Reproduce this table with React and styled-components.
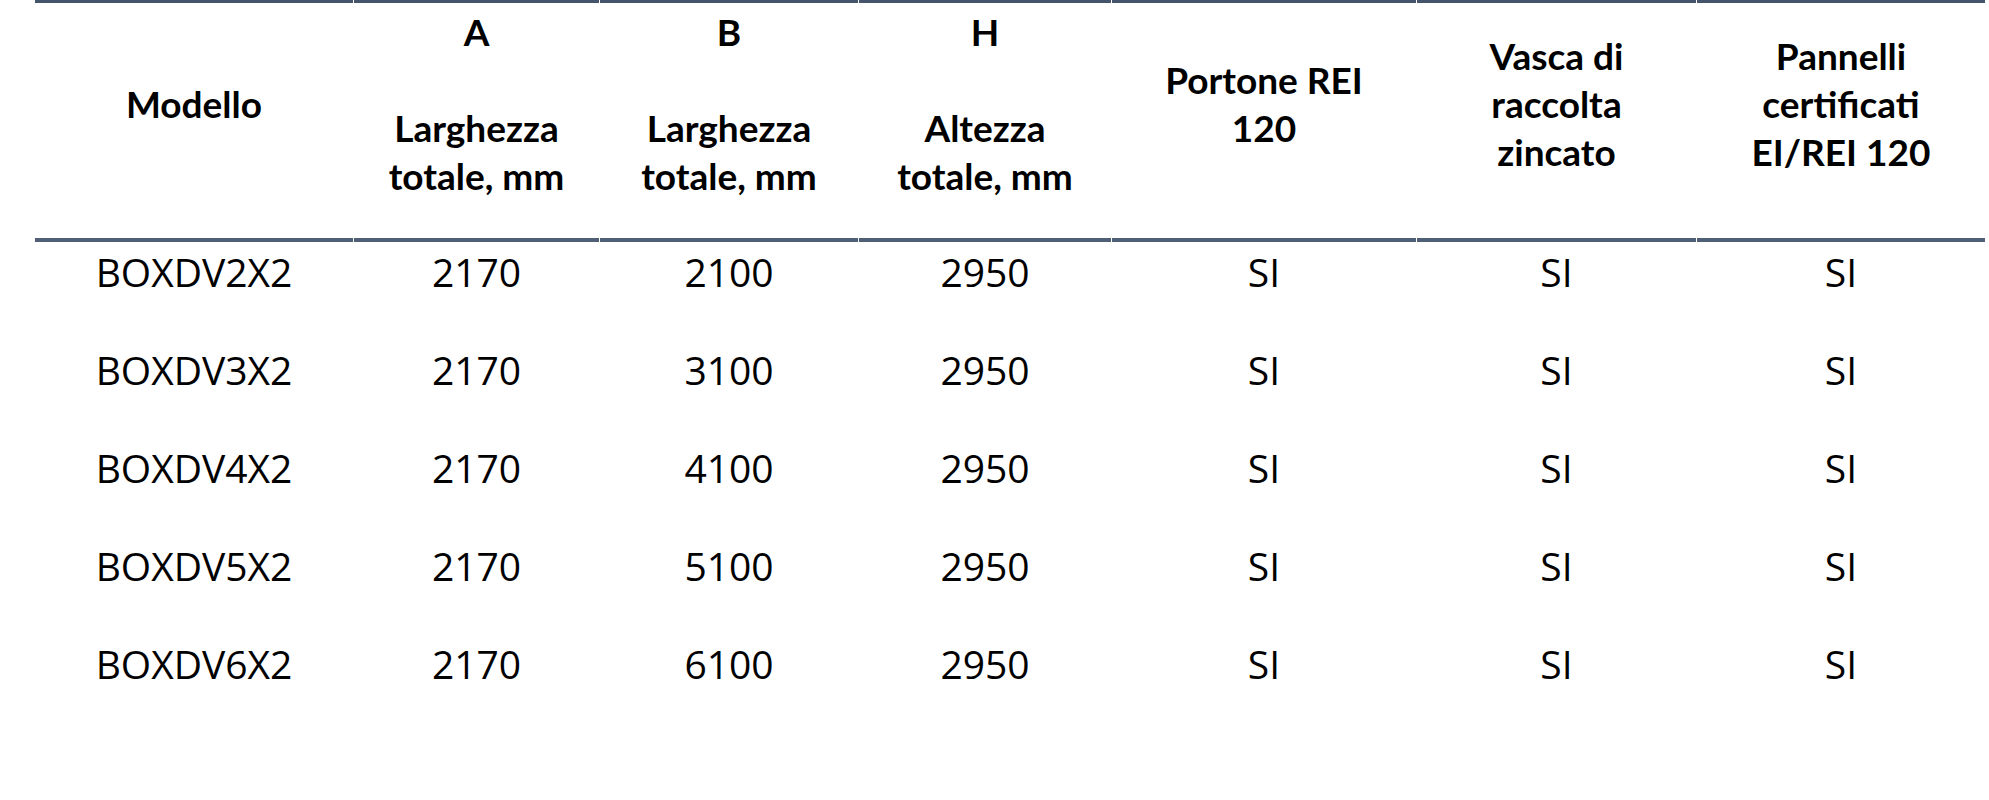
import React from "react";
import styled, { createGlobalStyle } from "styled-components";

const GlobalStyle = createGlobalStyle`
  html, body {
    margin: 0;
    padding: 0;
    background: #ffffff;
  }
`;

const columns = [318, 245, 258, 252, 304, 279, 288];

const headers = [
  ["Modello"],
  ["A", "", "Larghezza", "totale, mm"],
  ["B", "", "Larghezza", "totale, mm"],
  ["H", "", "Altezza", "totale, mm"],
  ["Portone REI", "120"],
  ["Vasca di", "raccolta", "zincato"],
  ["Pannelli", "certificati", "EI/REI 120"],
];

const rows = [2, 3, 4, 5, 6].map((n) => [
  `BOXDV${n}X2`,
  "2170",
  `${n}100`,
  "2950",
  "SI",
  "SI",
  "SI",
]);

export default function App() {
  return (
    <Page>
      <GlobalStyle />
      <Table>
        <colgroup>
          {columns.map((w, i) => (
            <col key={i} style={{ width: w }} />
          ))}
        </colgroup>
        <thead>
          <tr>
            {headers.map((lines, i) => (
              <HeadCell key={i}>
                {lines.map((line, j) => (
                  <HeadLine key={j}>{line || "\u00a0"}</HeadLine>
                ))}
              </HeadCell>
            ))}
          </tr>
        </thead>
        <tbody>
          {rows.map((row, i) => (
            <tr key={i}>
              {row.map((value, j) => (
                <BodyCell key={j}>{value}</BodyCell>
              ))}
            </tr>
          ))}
        </tbody>
      </Table>
    </Page>
  );
}

const Page = styled.div`
  padding-left: 34px;
`;

const Table = styled.table`
  table-layout: fixed;
  border-collapse: separate;
  border-spacing: 1px 0;
  color: #000000;
`;

const HeadCell = styled.th`
  padding: 5px 0 38px;
  vertical-align: middle;
  text-align: center;
  border-top: 3px solid #44546a;
  border-bottom: 4px solid #4f6076;
  font-family: Lato, "Noto Sans", sans-serif;
  font-weight: 700;
  font-size: 37px;
  line-height: 48px;
`;

const HeadLine = styled.div`
  white-space: nowrap;
`;

const BodyCell = styled.td`
  height: 48px;
  padding: 6px 0 44px;
  vertical-align: top;
  text-align: center;
  font-family: "Open Sans", "Noto Sans", sans-serif;
  font-size: 39px;
  line-height: 48px;
  white-space: nowrap;
`;
